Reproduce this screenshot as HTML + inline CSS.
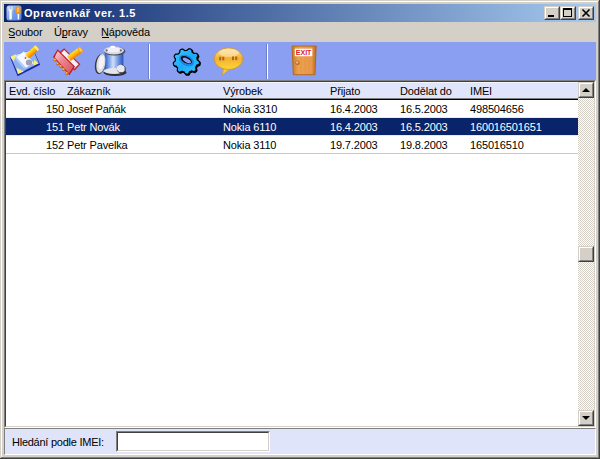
<!DOCTYPE html>
<html><head><meta charset="utf-8">
<style>
*{margin:0;padding:0;box-sizing:border-box}
html,body{width:600px;height:459px;overflow:hidden;background:#d4d0c8}
body{position:relative;font-family:"Liberation Sans",sans-serif;font-size:11px;color:#000}
.a{position:absolute}
.t{position:absolute;white-space:nowrap;line-height:13px;letter-spacing:-0.15px}
</style></head><body>
<!-- window frame -->
<div class="a" style="left:0;top:0;width:600px;height:459px;background:#d4d0c8"></div>
<div class="a" style="left:0;top:0;width:600px;height:1px;background:#d4d0c8"></div>
<div class="a" style="left:1px;top:1px;width:597px;height:1px;background:#fff"></div>
<div class="a" style="left:1px;top:1px;width:1px;height:457px;background:#fff"></div>
<div class="a" style="left:598px;top:1px;width:1px;height:457px;background:#808080"></div>
<div class="a" style="left:1px;top:457px;width:598px;height:1px;background:#808080"></div>
<div class="a" style="left:599px;top:0;width:1px;height:459px;background:#404040"></div>
<div class="a" style="left:0;top:458px;width:600px;height:1px;background:#404040"></div>

<!-- title bar -->
<div class="a" style="left:4px;top:4px;width:592px;height:18px;background:linear-gradient(to right,#0a246a,#a6caf0)"></div>
<div class="t" style="left:24px;top:6px;color:#fff;font-weight:bold;font-size:11px;line-height:14px;letter-spacing:0.55px">Opravenkář ver. 1.5</div>
<svg class="a" style="left:6px;top:5px" width="16" height="16" viewBox="0 0 16 16"><defs><linearGradient id="gIco" x1="0" y1="0" x2="1" y2="1"><stop offset="0" stop-color="#b8d0f8"/><stop offset="1" stop-color="#4a78d8"/></linearGradient><linearGradient id="gWr" x1="0" y1="0" x2="1" y2="0"><stop offset="0" stop-color="#c8d0e0"/><stop offset="0.5" stop-color="#ffffff"/><stop offset="1" stop-color="#b0b8c8"/></linearGradient></defs><rect x="0.5" y="0.5" width="15" height="15" rx="2.5" fill="url(#gIco)"/><path d="M1.8 3 Q1.8 1.2 3.6 1.2 L3.8 4.2 L5.2 4.2 L5.4 1.2 Q7.4 1.2 7.4 3.2 Q7.4 5.6 6 6.4 L6 13.6 Q6 14.6 4.6 14.6 Q3.2 14.6 3.2 13.6 L3.2 6.4 Q1.8 5.6 1.8 3 Z" fill="url(#gWr)"/><rect x="7.8" y="5" width="1.6" height="9.5" fill="#6a98f0"/><rect x="10" y="1.6" width="4.6" height="7.4" rx="1.2" fill="#f29418"/><rect x="11.1" y="2.6" width="1.6" height="4.2" fill="#fcc870"/><rect x="11.6" y="9" width="1.6" height="5.4" fill="#f4f8ff"/></svg>

<!-- menu -->
<div class="t" style="left:8px;top:26px">Soubor</div><div class="a" style="left:9px;top:37px;width:6px;height:1px;background:#000"></div>
<div class="t" style="left:54px;top:26px">Úpravy</div><div class="a" style="left:62px;top:37px;width:5px;height:1px;background:#000"></div>
<div class="t" style="left:101px;top:26px">Nápověda</div><div class="a" style="left:102px;top:37px;width:7px;height:1px;background:#000"></div>

<!-- toolbar -->
<div class="a" style="left:4px;top:42px;width:592px;height:38px;background:#8a9ff2"></div>

<!-- toolbar icons -->
<svg class="a" style="left:0;top:0" width="600" height="80" viewBox="0 0 600 80">
<defs>
<linearGradient id="gBody" x1="0" y1="0" x2="1" y2="0"><stop offset="0" stop-color="#2c5cc4"/><stop offset="0.2" stop-color="#6c98e4"/><stop offset="0.45" stop-color="#d0e0f8"/><stop offset="0.75" stop-color="#6890e0"/><stop offset="1" stop-color="#2850b8"/></linearGradient>
<linearGradient id="gBub" x1="0" y1="0" x2="0" y2="1"><stop offset="0" stop-color="#fbe2a8"/><stop offset="0.5" stop-color="#f4b030"/><stop offset="1" stop-color="#fcd838"/></linearGradient>
<linearGradient id="gDoor" x1="0" y1="0" x2="1" y2="0"><stop offset="0" stop-color="#c87a28"/><stop offset="0.25" stop-color="#eaa250"/><stop offset="0.8" stop-color="#e8984a"/><stop offset="1" stop-color="#b86a20"/></linearGradient>
<linearGradient id="gPen" x1="0" y1="0" x2="1" y2="1"><stop offset="0" stop-color="#ffe040"/><stop offset="1" stop-color="#f08a10"/></linearGradient>
<linearGradient id="gGear" x1="0" y1="0" x2="1" y2="1"><stop offset="0" stop-color="#38d0ff"/><stop offset="0.5" stop-color="#20a8f8"/><stop offset="1" stop-color="#30c8ff"/></linearGradient>
<linearGradient id="gPen2" x1="0" y1="0" x2="0" y2="1"><stop offset="0" stop-color="#ffe030"/><stop offset="0.5" stop-color="#ffb800"/><stop offset="1" stop-color="#f07800"/></linearGradient>
<linearGradient id="gCover" x1="0" y1="0" x2="1" y2="1"><stop offset="0" stop-color="#fcd0d8"/><stop offset="0.4" stop-color="#ec8890"/><stop offset="1" stop-color="#d85060"/></linearGradient>
</defs>
<!-- icon1 -->
<polygon points="9.7,56.5 33.3,49.6 40.2,64.8 17.6,76.2" fill="#1c2ca8"/>
<polygon points="10.4,56.3 33,50 38.8,63.2 18.2,74" fill="#8cb0f0"/>
<polygon points="10.4,56.3 33,50 34,52.2 11.8,58.8" fill="#c8dcff"/>
<polygon points="10.3,56.9 16,54 13.9,61.5" fill="#f8f070"/>
<polygon points="16.4,67.7 17.9,74 23.8,71.4" fill="#f8f070"/>
<polygon points="34.2,59.8 38.6,63.5 33.3,65.6" fill="#f8f070"/>
<polygon points="16.4,57.3 23.8,51.5 33.8,63.1 25.9,67.7" fill="#f6f8ff"/>
<polygon points="16.4,57.3 25.9,67.7 24,68.6 15,58.4" fill="#b8d0f8"/>
<ellipse cx="29" cy="62.4" rx="3.2" ry="3" fill="#9aa2b4"/>
<g transform="translate(24.6,58.6) rotate(-41)"><polygon points="0,0 3.5,-2.4 3.5,2.6" fill="#f8d8a0"/><polygon points="0,0 1.4,-1 1.4,1" fill="#202020"/><rect x="3.5" y="-2.8" width="13.5" height="5.6" rx="0.8" fill="url(#gPen2)"/><rect x="14.5" y="-2.8" width="2.5" height="5.6" rx="0.8" fill="#ffe878"/></g>
<!-- icon2 -->
<polygon points="64.1,48.2 80.4,64.2 74.5,70.8 57.5,54" fill="#c42828"/>
<polygon points="64.2,50 78.6,64.2 74.2,68.8 59.5,54.5" fill="#eef2ff"/>
<g transform="translate(68.8,58.6) rotate(-37)"><rect x="0" y="-3" width="16" height="6" fill="url(#gPen2)"/><rect x="13" y="-3.2" width="3.2" height="6.4" rx="1" fill="#f8a020"/><rect x="13.8" y="-1.8" width="1.6" height="3.4" fill="#ffe070"/></g>
<polygon points="57.6,49.2 75,66.4 69.4,75.2 53,57" fill="#c01828"/>
<polygon points="57.8,51 73.4,66.4 69,73.4 54.6,57.2" fill="url(#gCover)"/>
<g fill="#c86818"><circle cx="55" cy="60" r="1.6"/><circle cx="57.7" cy="63.8" r="1.6"/><circle cx="60.7" cy="66.4" r="1.6"/><circle cx="63.7" cy="69.6" r="1.6"/><circle cx="66.8" cy="73.4" r="1.6"/></g>
<g fill="#f8c040"><circle cx="54.8" cy="59.5" r="0.9"/><circle cx="57.5" cy="63.3" r="0.9"/><circle cx="60.5" cy="65.9" r="0.9"/><circle cx="63.5" cy="69.1" r="0.9"/><circle cx="66.6" cy="72.9" r="0.9"/></g>
<!-- icon3 trash -->
<ellipse cx="115" cy="72.6" rx="11.6" ry="3.4" fill="#303038"/>
<rect x="104.6" y="53.5" width="18.8" height="18" fill="url(#gBody)"/>
<ellipse cx="114" cy="71" rx="10.4" ry="2.9" fill="#e4e4ea"/>
<ellipse cx="114.6" cy="51.2" rx="10.6" ry="4.4" fill="#404048"/>
<ellipse cx="113.9" cy="50.5" rx="10.1" ry="4" fill="#d8d8e0"/>
<ellipse cx="113.6" cy="50" rx="8" ry="2.6" fill="#f0f0f6"/>
<ellipse cx="112.8" cy="46.9" rx="2.6" ry="1.2" fill="#ffffff"/>
<circle cx="106.6" cy="50.4" r="1.1" fill="#606874"/><circle cx="120.8" cy="50.4" r="1.1" fill="#606874"/>
<ellipse cx="100.2" cy="64" rx="5.2" ry="10.2" fill="#383840" transform="rotate(10 100.2 64)"/>
<ellipse cx="100.9" cy="63.5" rx="4.4" ry="9.6" fill="#dcdce4" transform="rotate(10 100.9 63.5)"/>
<ellipse cx="101.4" cy="62.4" rx="2.6" ry="7" fill="#f4f4f8" transform="rotate(10 101.4 62.4)"/>
<path d="M117 70 Q116 66 119 65 Q121 63.5 123 65.5 Q126 66 125.6 69 Q126.5 72 123 73 Q119 74 117 70 Z" fill="#383840"/>
<path d="M116.6 69.4 Q116 66 118.8 65.2 Q121 63.8 122.6 65.6 Q125 66.2 124.6 68.8 Q125.2 71.4 122.4 72.2 Q118.8 73 116.6 69.4 Z" fill="#e8e8ee"/>
<!-- gear -->
<path d="M199.05 61.30 L199.44 61.75 L199.42 62.20 L199.38 62.65 L199.32 63.09 L199.25 63.54 L199.16 63.98 L198.88 64.37 L198.30 64.67 L197.67 64.92 L197.06 65.14 L196.55 65.36 L196.39 65.70 L196.23 66.05 L196.06 66.38 L195.87 66.71 L195.67 67.04 L195.61 67.46 L195.78 68.05 L195.95 68.69 L196.07 69.33 L196.07 69.92 L195.76 70.25 L195.43 70.57 L195.10 70.88 L194.75 71.17 L194.40 71.46 L193.92 71.58 L193.28 71.44 L192.64 71.24 L192.02 71.01 L191.49 70.86 L191.14 71.03 L190.79 71.19 L190.44 71.34 L190.08 71.48 L189.71 71.60 L189.40 71.88 L189.14 72.44 L188.85 73.04 L188.51 73.61 L188.13 74.06 L187.67 74.12 L187.22 74.16 L186.76 74.18 L186.30 74.19 L185.84 74.18 L185.40 73.98 L185.00 73.46 L184.64 72.90 L184.31 72.35 L184.00 71.89 L183.63 71.81 L183.25 71.71 L182.89 71.60 L182.52 71.48 L182.16 71.34 L181.73 71.36 L181.16 71.62 L180.55 71.89 L179.92 72.12 L179.33 72.23 L178.95 71.98 L178.57 71.73 L178.20 71.46 L177.85 71.17 L177.50 70.88 L177.29 70.44 L177.32 69.80 L177.41 69.14 L177.53 68.51 L177.59 67.97 L177.36 67.67 L177.14 67.36 L176.93 67.04 L176.73 66.71 L176.54 66.38 L176.20 66.13 L175.59 65.97 L174.95 65.79 L174.31 65.57 L173.79 65.28 L173.66 64.85 L173.54 64.42 L173.44 63.98 L173.35 63.54 L173.28 63.09 L173.40 62.63 L173.85 62.15 L174.35 61.71 L174.85 61.30 L175.26 60.92 L175.28 60.54 L175.31 60.17 L175.36 59.79 L175.42 59.42 L175.49 59.05 L175.40 58.64 L175.03 58.13 L174.66 57.59 L174.31 57.03 L174.11 56.47 L174.29 56.06 L174.48 55.65 L174.69 55.25 L174.91 54.86 L175.15 54.47 L175.55 54.19 L176.20 54.11 L176.88 54.09 L177.53 54.09 L178.09 54.05 L178.35 53.78 L178.62 53.51 L178.91 53.25 L179.20 53.00 L179.50 52.77 L179.70 52.39 L179.75 51.78 L179.81 51.12 L179.92 50.48 L180.13 49.92 L180.54 49.72 L180.95 49.53 L181.37 49.35 L181.80 49.19 L182.24 49.04 L182.73 49.08 L183.28 49.43 L183.81 49.84 L184.31 50.25 L184.76 50.58 L185.14 50.53 L185.53 50.50 L185.91 50.48 L186.30 50.47 L186.69 50.48 L187.08 50.32 L187.53 49.88 L188.00 49.42 L188.51 48.99 L189.03 48.69 L189.48 48.80 L189.92 48.91 L190.36 49.04 L190.80 49.19 L191.23 49.35 L191.57 49.69 L191.77 50.31 L191.91 50.95 L192.02 51.59 L192.16 52.12 L192.48 52.32 L192.80 52.54 L193.10 52.77 L193.40 53.00 L193.69 53.25 L194.10 53.38 L194.73 53.32 L195.40 53.27 L196.07 53.27 L196.66 53.37 L196.94 53.73 L197.20 54.09 L197.45 54.47 L197.69 54.86 L197.91 55.25 L197.95 55.73 L197.70 56.33 L197.39 56.91 L197.06 57.46 L196.81 57.95 L196.92 58.32 L197.02 58.68 L197.11 59.05 L197.18 59.42 L197.24 59.79 L197.47 60.15 L197.99 60.50 L198.54 60.88Z" fill="#000" stroke="#000" stroke-width="1.3" transform="translate(0.8 0.9)"/>
<path d="M199.05 61.30 L199.44 61.75 L199.42 62.20 L199.38 62.65 L199.32 63.09 L199.25 63.54 L199.16 63.98 L198.88 64.37 L198.30 64.67 L197.67 64.92 L197.06 65.14 L196.55 65.36 L196.39 65.70 L196.23 66.05 L196.06 66.38 L195.87 66.71 L195.67 67.04 L195.61 67.46 L195.78 68.05 L195.95 68.69 L196.07 69.33 L196.07 69.92 L195.76 70.25 L195.43 70.57 L195.10 70.88 L194.75 71.17 L194.40 71.46 L193.92 71.58 L193.28 71.44 L192.64 71.24 L192.02 71.01 L191.49 70.86 L191.14 71.03 L190.79 71.19 L190.44 71.34 L190.08 71.48 L189.71 71.60 L189.40 71.88 L189.14 72.44 L188.85 73.04 L188.51 73.61 L188.13 74.06 L187.67 74.12 L187.22 74.16 L186.76 74.18 L186.30 74.19 L185.84 74.18 L185.40 73.98 L185.00 73.46 L184.64 72.90 L184.31 72.35 L184.00 71.89 L183.63 71.81 L183.25 71.71 L182.89 71.60 L182.52 71.48 L182.16 71.34 L181.73 71.36 L181.16 71.62 L180.55 71.89 L179.92 72.12 L179.33 72.23 L178.95 71.98 L178.57 71.73 L178.20 71.46 L177.85 71.17 L177.50 70.88 L177.29 70.44 L177.32 69.80 L177.41 69.14 L177.53 68.51 L177.59 67.97 L177.36 67.67 L177.14 67.36 L176.93 67.04 L176.73 66.71 L176.54 66.38 L176.20 66.13 L175.59 65.97 L174.95 65.79 L174.31 65.57 L173.79 65.28 L173.66 64.85 L173.54 64.42 L173.44 63.98 L173.35 63.54 L173.28 63.09 L173.40 62.63 L173.85 62.15 L174.35 61.71 L174.85 61.30 L175.26 60.92 L175.28 60.54 L175.31 60.17 L175.36 59.79 L175.42 59.42 L175.49 59.05 L175.40 58.64 L175.03 58.13 L174.66 57.59 L174.31 57.03 L174.11 56.47 L174.29 56.06 L174.48 55.65 L174.69 55.25 L174.91 54.86 L175.15 54.47 L175.55 54.19 L176.20 54.11 L176.88 54.09 L177.53 54.09 L178.09 54.05 L178.35 53.78 L178.62 53.51 L178.91 53.25 L179.20 53.00 L179.50 52.77 L179.70 52.39 L179.75 51.78 L179.81 51.12 L179.92 50.48 L180.13 49.92 L180.54 49.72 L180.95 49.53 L181.37 49.35 L181.80 49.19 L182.24 49.04 L182.73 49.08 L183.28 49.43 L183.81 49.84 L184.31 50.25 L184.76 50.58 L185.14 50.53 L185.53 50.50 L185.91 50.48 L186.30 50.47 L186.69 50.48 L187.08 50.32 L187.53 49.88 L188.00 49.42 L188.51 48.99 L189.03 48.69 L189.48 48.80 L189.92 48.91 L190.36 49.04 L190.80 49.19 L191.23 49.35 L191.57 49.69 L191.77 50.31 L191.91 50.95 L192.02 51.59 L192.16 52.12 L192.48 52.32 L192.80 52.54 L193.10 52.77 L193.40 53.00 L193.69 53.25 L194.10 53.38 L194.73 53.32 L195.40 53.27 L196.07 53.27 L196.66 53.37 L196.94 53.73 L197.20 54.09 L197.45 54.47 L197.69 54.86 L197.91 55.25 L197.95 55.73 L197.70 56.33 L197.39 56.91 L197.06 57.46 L196.81 57.95 L196.92 58.32 L197.02 58.68 L197.11 59.05 L197.18 59.42 L197.24 59.79 L197.47 60.15 L197.99 60.50 L198.54 60.88Z" fill="url(#gGear)" stroke="#000" stroke-width="1.2" stroke-linejoin="round"/>
<ellipse cx="186.5" cy="60.5" rx="8" ry="5" transform="rotate(28 186.5 60.5)" fill="#1478e0" opacity="0.75"/>
<ellipse cx="186.3" cy="60" rx="6" ry="3.2" transform="rotate(28 186.3 60)" fill="#000"/>
<ellipse cx="186.8" cy="60.5" rx="4.6" ry="1.9" transform="rotate(28 186.8 60.5)" fill="#8a9ff2"/>
<!-- bubble -->
<path d="M223.5 68 L222.4 75.2 L229.2 69.4 Z" fill="#f4c838" stroke="#d89020" stroke-width="0.6"/>
<ellipse cx="228.5" cy="58.7" rx="14.2" ry="10.8" fill="url(#gBub)" stroke="#d8901c" stroke-width="0.8"/>
<ellipse cx="229" cy="52.8" rx="10" ry="4" fill="#fff0c8" opacity="0.5"/>
<g fill="#a8681c"><rect x="219.2" y="56.8" width="2" height="3.6"/><rect x="222.3" y="56.8" width="2" height="3.6"/><rect x="232" y="56.5" width="2" height="3.6"/><rect x="235.2" y="56.5" width="2" height="3.6"/></g>
<!-- door -->
<polygon points="292.1,46.1 316.2,46.1 315,74.7 293.3,74.7" fill="url(#gDoor)" stroke="#b06418" stroke-width="0.9"/>
<g stroke="#d88838" stroke-width="0.5" opacity="0.7"><line x1="301" y1="58" x2="301" y2="73"/><line x1="305" y1="58" x2="305" y2="73"/><line x1="309" y1="58" x2="309" y2="73"/></g>
<rect x="294.8" y="48.7" width="17.5" height="7.5" fill="#ffffff"/>
<text x="303.6" y="55.4" font-family="Liberation Sans" font-weight="bold" font-size="7" fill="#e01830" text-anchor="middle">EXIT</text>
<circle cx="297.5" cy="62.8" r="2.2" fill="#b86820"/>
<circle cx="297.2" cy="62.4" r="1.2" fill="#f0c080"/>
<!-- separators -->
<rect x="148" y="44" width="1" height="35" fill="#7080c8"/>
<rect x="149" y="44" width="1" height="35" fill="#ffffff"/>
<rect x="266" y="44" width="1" height="35" fill="#7080c8"/>
<rect x="267" y="44" width="1" height="35" fill="#ffffff"/>
</svg>

<!-- list view -->
<div class="a" style="left:4px;top:80px;width:592px;height:348px;background:#fff;border-top:1px solid #808080;border-left:1px solid #808080;border-right:1px solid #fff;border-bottom:1px solid #fff"></div>
<div class="a" style="left:5px;top:81px;width:590px;height:346px;border-top:1px solid #404040;border-left:1px solid #404040;border-right:1px solid #d4d0c8;border-bottom:1px solid #d4d0c8"></div>
<div class="a" style="left:6px;top:82px;width:572px;height:16px;background:#e0e5fb;border-top:1px solid #f4f6fe"></div>
<div class="a" style="left:6px;top:98px;width:572px;height:1px;background:#808080"></div>
<div class="a" style="left:6px;top:99px;width:572px;height:1px;background:#000"></div>
<!-- scrollbar -->
<svg class="a" style="left:578px;top:98px" width="16" height="312"><defs><pattern id="chk" width="2" height="2" patternUnits="userSpaceOnUse"><rect width="2" height="2" fill="#fff"/><rect width="1" height="1" fill="#d4d0c8"/><rect x="1" y="1" width="1" height="1" fill="#d4d0c8"/></pattern></defs><rect width="16" height="312" fill="url(#chk)"/></svg>
<div class="a" style="left:578px;top:82px;width:16px;height:16px;background:#d4d0c8;border-top:1px solid #d4d0c8;border-left:1px solid #d4d0c8;border-right:1px solid #404040;border-bottom:1px solid #404040"><div class="a" style="left:0;top:0;width:14px;height:14px;border-top:1px solid #fff;border-left:1px solid #fff;border-right:1px solid #808080;border-bottom:1px solid #808080"></div><svg class="a" style="left:0;top:0" width="14" height="14"><path d="M7 5 L3 9 L11 9 Z" fill="#000"/></svg></div>
<div class="a" style="left:578px;top:410px;width:16px;height:16px;background:#d4d0c8;border-top:1px solid #d4d0c8;border-left:1px solid #d4d0c8;border-right:1px solid #404040;border-bottom:1px solid #404040"><div class="a" style="left:0;top:0;width:14px;height:14px;border-top:1px solid #fff;border-left:1px solid #fff;border-right:1px solid #808080;border-bottom:1px solid #808080"></div><svg class="a" style="left:0;top:0" width="14" height="14"><path d="M3 5 L11 5 L7 9 Z" fill="#000"/></svg></div>
<div class="a" style="left:578px;top:246px;width:16px;height:16px;background:#d4d0c8;border-top:1px solid #d4d0c8;border-left:1px solid #d4d0c8;border-right:1px solid #404040;border-bottom:1px solid #404040"><div class="a" style="left:0;top:0;width:14px;height:14px;border-top:1px solid #fff;border-left:1px solid #fff;border-right:1px solid #808080;border-bottom:1px solid #808080"></div></div>
<!-- title buttons -->
<div class="a" style="left:544px;top:6px;width:16px;height:14px;background:#d4d0c8;border-top:1px solid #d4d0c8;border-left:1px solid #d4d0c8;border-right:1px solid #404040;border-bottom:1px solid #404040"><div class="a" style="left:0;top:0;width:14px;height:12px;border-top:1px solid #fff;border-left:1px solid #fff;border-right:1px solid #808080;border-bottom:1px solid #808080"></div><div class="a" style="left:3px;top:8px;width:6px;height:2px;background:#000"></div></div>
<div class="a" style="left:560px;top:6px;width:16px;height:14px;background:#d4d0c8;border-top:1px solid #d4d0c8;border-left:1px solid #d4d0c8;border-right:1px solid #404040;border-bottom:1px solid #404040"><div class="a" style="left:0;top:0;width:14px;height:12px;border-top:1px solid #fff;border-left:1px solid #fff;border-right:1px solid #808080;border-bottom:1px solid #808080"></div><div class="a" style="left:2px;top:1px;width:9px;height:9px;border:1px solid #000;border-top-width:2px"></div></div>
<div class="a" style="left:578px;top:6px;width:16px;height:14px;background:#d4d0c8;border-top:1px solid #d4d0c8;border-left:1px solid #d4d0c8;border-right:1px solid #404040;border-bottom:1px solid #404040"><div class="a" style="left:0;top:0;width:14px;height:12px;border-top:1px solid #fff;border-left:1px solid #fff;border-right:1px solid #808080;border-bottom:1px solid #808080"></div><svg class="a" style="left:0;top:0" width="14" height="12"><path d="M3.5 2.5 L10.5 9.5 M10.5 2.5 L3.5 9.5" stroke="#000" stroke-width="1.6"/></svg></div>
<!-- header text -->
<div class="t" style="left:9px;top:85px">Evd. číslo</div>
<div class="t" style="left:67px;top:85px">Zákazník</div>
<div class="t" style="left:223px;top:85px">Výrobek</div>
<div class="t" style="left:330px;top:85px">Přijato</div>
<div class="t" style="left:400px;top:85px">Dodělat do</div>
<div class="t" style="left:470px;top:85px">IMEI</div>
<!-- rows -->
<div class="a" style="left:6px;top:117px;width:572px;height:1px;background:#eceae6"></div>
<div class="a" style="left:6px;top:118px;width:572px;height:17px;background:#0a246a"></div>
<div class="a" style="left:6px;top:135px;width:572px;height:1px;background:#eceae6"></div>
<div class="a" style="left:6px;top:153px;width:572px;height:1px;background:#c8c8c8"></div>
<div class="t" style="left:9px;top:103px;width:55px;text-align:right">150</div>
<div class="t" style="left:67px;top:103px">Josef Paňák</div>
<div class="t" style="left:223px;top:103px">Nokia 3310</div>
<div class="t" style="left:330px;top:103px">16.4.2003</div>
<div class="t" style="left:400px;top:103px">16.5.2003</div>
<div class="t" style="left:470px;top:103px">498504656</div>
<div class="t" style="left:9px;top:121px;width:55px;text-align:right;color:#fff">151</div>
<div class="t" style="left:67px;top:121px;color:#fff">Petr Novák</div>
<div class="t" style="left:223px;top:121px;color:#fff">Nokia 6110</div>
<div class="t" style="left:330px;top:121px;color:#fff">16.4.2003</div>
<div class="t" style="left:400px;top:121px;color:#fff">16.5.2003</div>
<div class="t" style="left:470px;top:121px;color:#fff">160016501651</div>
<div class="t" style="left:9px;top:139px;width:55px;text-align:right">152</div>
<div class="t" style="left:67px;top:139px">Petr Pavelka</div>
<div class="t" style="left:223px;top:139px">Nokia 3110</div>
<div class="t" style="left:330px;top:139px">19.7.2003</div>
<div class="t" style="left:400px;top:139px">19.8.2003</div>
<div class="t" style="left:470px;top:139px">165016510</div>

<!-- status -->
<div class="a" style="left:4px;top:428px;width:592px;height:27px;background:#dfe4fa;border-top:1px solid #808080;border-left:1px solid #808080;border-bottom:1px solid #fff;border-right:1px solid #fff"></div>
<div class="t" style="left:12px;top:436px;letter-spacing:-0.25px">Hledání podle IMEI:</div>
<div class="a" style="left:116px;top:431px;width:154px;height:21px;background:#fff;border-top:1px solid #808080;border-left:1px solid #808080;border-bottom:1px solid #fff;border-right:1px solid #fff"></div>
<div class="a" style="left:117px;top:432px;width:152px;height:19px;border-top:1px solid #404040;border-left:1px solid #404040;border-bottom:1px solid #d4d0c8;border-right:1px solid #d4d0c8"></div>
</body></html>
